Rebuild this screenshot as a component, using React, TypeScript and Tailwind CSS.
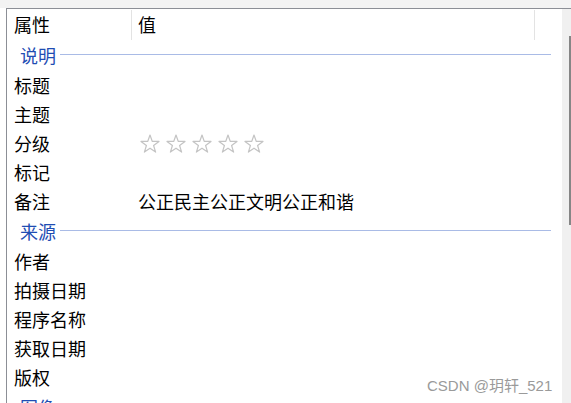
import React from 'react'

const font = { fontFamily: '"Noto Sans CJK SC", "Liberation Sans", sans-serif' }

type Row = { kind: 'group'; label: string } | { kind: 'prop'; label: string; value?: React.ReactNode }

function Stars() {
  return (
    <div className="flex gap-[6px] pl-[2px]">
      {[0, 1, 2, 3, 4].map((i) => (
        <svg key={i} width="20" height="20" viewBox="0 0 20 20">
          <polygon
            points="10,1 12.2,7.3 19,7.4 13.6,11.5 15.6,18.1 10,14.2 4.4,18.1 6.4,11.5 1,7.4 7.8,7.3"
            fill="none"
            stroke="#c4c4c4"
            strokeWidth="1.2"
            strokeLinejoin="round"
          />
        </svg>
      ))}
    </div>
  )
}

const rows: Row[] = [
  { kind: 'group', label: '说明' },
  { kind: 'prop', label: '标题' },
  { kind: 'prop', label: '主题' },
  { kind: 'prop', label: '分级', value: <Stars /> },
  { kind: 'prop', label: '标记' },
  { kind: 'prop', label: '备注', value: '公正民主公正文明公正和谐' },
  { kind: 'group', label: '来源' },
  { kind: 'prop', label: '作者' },
  { kind: 'prop', label: '拍摄日期' },
  { kind: 'prop', label: '程序名称' },
  { kind: 'prop', label: '获取日期' },
  { kind: 'prop', label: '版权' },
  { kind: 'group', label: '图像' },
]

export default function App() {
  return (
    <div className="relative w-[571px] h-[403px] overflow-hidden bg-white flex flex-col" style={font}>
      <div className="h-[8px] bg-[#f3f3f3] shrink-0" />
      <div className="flex flex-1 ml-[6px] border-l border-t border-[#8c8f96] min-h-0">
        <div className="flex-1 flex flex-col text-[18px] text-black">
          {/* header */}
          <div className="flex h-[31px] items-center shrink-0">
            <div className="w-[124px] pl-[7px]">属性</div>
            <div className="w-px h-[30px] bg-[#e3e3e3]" />
            <div className="w-[402px] pl-[6px]">值</div>
            <div className="w-px h-[30px] bg-[#e3e3e3]" />
            <div className="flex-1" />
          </div>
          {rows.map((r, i) =>
            r.kind === 'group' ? (
              <div key={i} className="flex h-[31px] items-center shrink-0 pl-[13px] pr-[11px] text-[#1f4db3]">
                <span>{r.label}</span>
                <div className="flex-1 h-px bg-[#a9bbe6] ml-[4px] -mt-[2px]" />
              </div>
            ) : (
              <div key={i} className="flex h-[29px] items-center shrink-0">
                <div className="w-[125px] pl-[7px] whitespace-nowrap">{r.label}</div>
                <div className="pl-[6px] whitespace-nowrap">{r.value}</div>
              </div>
            )
          )}
        </div>
        <div className="w-[9px] bg-[#f0f0f0] shrink-0 flex justify-end">
          <div className="w-[2px] h-[189px] mt-[27px] bg-[#868686]" />
        </div>
      </div>
      <div
        className="absolute left-[427px] top-[375px] text-[15px] text-[#9a9a9a] whitespace-nowrap"
        style={{ fontFamily: '"Liberation Sans", "Noto Sans CJK SC", sans-serif' }}
      >
        CSDN @玥轩_521
      </div>
    </div>
  )
}
